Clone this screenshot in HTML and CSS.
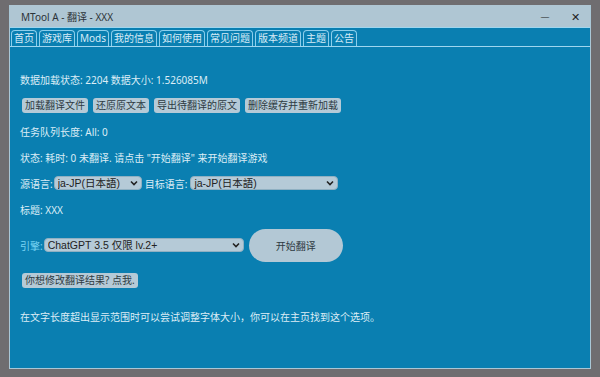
FILE: index.html
```html
<!DOCTYPE html>
<html lang="zh">
  <head>
    <meta charset="utf-8">
    <title>MTool A - 翻译 - XXX</title>
    <link rel="stylesheet" href="styles.css">
  </head>
  <body>
    <div class="window">
      <div class="titlebar">
        <span class="title">MTool A - 翻译 - XXX</span>
        <span class="ctrl min">&#8212;</span>
        <span class="ctrl close">&#10005;</span>
      </div>

      <div class="tabs">
        <span class="tab">首页</span>
        <span class="tab">游戏库</span>
        <span class="tab">Mods</span>
        <span class="tab">我的信息</span>
        <span class="tab">如何使用</span>
        <span class="tab">常见问题</span>
        <span class="tab">版本频道</span>
        <span class="tab">主题</span>
        <span class="tab">公告</span>
      </div>

      <div class="content">
        <div class="row">数据加载状态: 2204 数据大小: 1.526085M</div>

        <div class="row">
          <button class="btn">加载翻译文件</button>
          <button class="btn">还原原文本</button>
          <button class="btn">导出待翻译的原文</button>
          <button class="btn">删除缓存并重新加载</button>
        </div>

        <div class="row">任务队列长度: All: 0</div>
        <div class="row">状态: 耗时: 0 未翻译. 请点击 "开始翻译" 来开始翻译游戏</div>

        <div class="row">
          <span>源语言:</span>
          <span class="sel src">
            <select><option>ja-JP(日本語)</option></select>
            <svg class="chev" width="8" height="6" viewBox="0 0 8 6"><path d="M1 1.5 L4 4.5 L7 1.5" fill="none" stroke="#222" stroke-width="1.6"/></svg>
          </span>
          <span>目标语言:</span>
          <span class="sel dst">
            <select><option>ja-JP(日本語)</option></select>
            <svg class="chev" width="8" height="6" viewBox="0 0 8 6"><path d="M1 1.5 L4 4.5 L7 1.5" fill="none" stroke="#222" stroke-width="1.6"/></svg>
          </span>
        </div>

        <div class="row">标题: XXX</div>

        <div class="row engine">
          <span class="label-hi">引擎:</span>
          <span class="sel eng">
            <select><option>ChatGPT 3.5 仅限 lv.2+</option></select>
            <svg class="chev" width="8" height="6" viewBox="0 0 8 6"><path d="M1 1.5 L4 4.5 L7 1.5" fill="none" stroke="#222" stroke-width="1.6"/></svg>
          </span>
          <button class="start">开始翻译</button>
        </div>

        <div class="row fix">
          <button class="btn">你想修改翻译结果? 点我.</button>
        </div>

        <div class="row tip">在文字长度超出显示范围时可以尝试调整字体大小，你可以在主页找到这个选项。</div>
      </div>
    </div>
  </body>
</html>
```

FILE: styles.css
```css
* {
  box-sizing: border-box;
}
body {
  margin: 0;
  background-color: #6f6d70;
  font-family: "Noto Sans", "Noto Sans CJK SC", sans-serif;
}
.window {
  margin: 5px 0 0 9px;
  width: 582px;
  height: 364px;
  background-color: #0a7fb1;
  border-left: 1px solid #a9c7d6;
  border-right: 1px solid #a9c7d6;
  border-bottom: 1px solid #a9c7d6;
}
.titlebar {
  height: 23px;
  background-color: #afc6d3;
  border-bottom: 1px solid #9fd6ef;
  display: flex;
  align-items: center;
  padding-left: 11px;
  color: #2c3338;
  font-size: 10px;
}
.title {
  flex: 1;
}
.ctrl {
  width: 30px;
  text-align: center;
  color: #222;
}
.min {
  font-size: 9px;
}
.close {
  font-size: 11px;
}
.tabs {
  height: 19px;
  display: flex;
  align-items: flex-end;
  gap: 2px;
  padding-left: 1px;
  border-bottom: 1px solid #9fd6ef;
}
.tab {
  height: 16px;
  line-height: 14px;
  padding: 0 2px;
  border: 1px solid #8ccfec;
  border-bottom: none;
  border-radius: 4px 4px 0 0;
  color: #d7ecf7;
  font-size: 10px;
}
.content {
  padding: 19px 0 0 10px;
  color: #dcedf6;
  font-size: 10px;
}
.row {
  height: 26px;
  display: flex;
  align-items: center;
  white-space: nowrap;
}
.btn {
  height: 15px;
  margin-right: 5px;
  padding: 0 3px;
  border: none;
  border-radius: 3px;
  background-color: #b5cad7;
  color: #2e3a42;
  font-family: "Noto Sans", "Noto Sans CJK SC", sans-serif;
  font-size: 10px;
  line-height: 15px;
}
.row .btn:first-child {
  margin-left: 2px;
}
.sel {
  position: relative;
  display: inline-block;
  height: 14px;
  margin: 0 3px 0 3px;
}
.sel select {
  appearance: none;
  -webkit-appearance: none;
  height: 14px;
  width: 100%;
  padding: 0 0 0 3px;
  border: 1px solid #8fb0c2;
  border-radius: 4px;
  background-color: #b5cad7;
  color: #222;
  font-family: "Liberation Sans", "Noto Sans CJK JP", sans-serif;
  font-size: 10.5px;
  line-height: 12px;
}
.chev {
  position: absolute;
  right: 4px;
  top: 4px;
}
.src {
  width: 88px;
  margin-left: 1px;
}
.dst {
  width: 148px;
}
.engine {
  height: 34px;
  margin-top: 6px;
}
.label-hi {
  color: #79d4f4;
}
.eng {
  width: 200px;
  margin-left: 1px;
  margin-right: 5px;
}
.start {
  width: 94px;
  height: 33px;
  border: none;
  border-radius: 17px;
  background-color: #b3c8d5;
  color: #2e3a42;
  font-family: "Noto Sans", "Noto Sans CJK SC", sans-serif;
  font-size: 10px;
}
.fix {
  margin-top: 5px;
}
.tip {
  margin-top: 10px;
  font-size: 10px;
}
```
